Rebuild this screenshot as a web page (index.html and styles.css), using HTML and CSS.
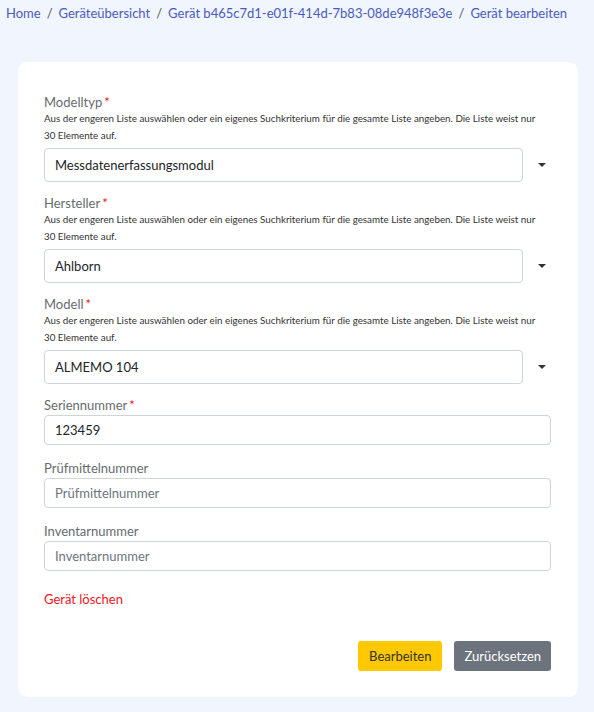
FILE: index.html
```html
<!DOCTYPE html>
<html lang="de">
<head>
<meta charset="utf-8">
<title>Gerät bearbeiten</title>
<link rel="stylesheet" href="styles.css">
</head>
<body>
<nav class="crumbs">
  <a href="#">Home</a><span class="sep">/</span><a href="#">Geräteübersicht</a><span class="sep">/</span><a href="#">Gerät b465c7d1-e01f-414d-7b83-08de948f3e3e</a><span class="sep">/</span><span class="cur">Gerät bearbeiten</span>
</nav>
<main class="card">
  <div class="group">
    <label class="lbl">Modelltyp<span class="req">*</span></label>
    <p class="help">Aus der engeren Liste auswählen oder ein eigenes Suchkriterium für die gesamte Liste angeben. Die Liste weist nur 30 Elemente auf.</p>
    <div class="select-row">
      <div class="field big">Messdatenerfassungsmodul</div>
      <span class="caret"></span>
    </div>
  </div>
  <div class="group">
    <label class="lbl">Hersteller<span class="req">*</span></label>
    <p class="help">Aus der engeren Liste auswählen oder ein eigenes Suchkriterium für die gesamte Liste angeben. Die Liste weist nur 30 Elemente auf.</p>
    <div class="select-row">
      <div class="field big">Ahlborn</div>
      <span class="caret"></span>
    </div>
  </div>
  <div class="group">
    <label class="lbl">Modell<span class="req">*</span></label>
    <p class="help">Aus der engeren Liste auswählen oder ein eigenes Suchkriterium für die gesamte Liste angeben. Die Liste weist nur 30 Elemente auf.</p>
    <div class="select-row">
      <div class="field big">ALMEMO 104</div>
      <span class="caret"></span>
    </div>
  </div>
  <div class="group text">
    <label class="lbl">Seriennummer<span class="req">*</span></label>
    <div class="field">123459</div>
  </div>
  <div class="group text">
    <label class="lbl">Prüfmittelnummer</label>
    <div class="field ph">Prüfmittelnummer</div>
  </div>
  <div class="group text">
    <label class="lbl">Inventarnummer</label>
    <div class="field ph">Inventarnummer</div>
  </div>
  <a class="delete" href="#">Gerät löschen</a>
  <div class="actions">
    <button class="btn edit">Bearbeiten</button>
    <button class="btn reset">Zurücksetzen</button>
  </div>
</main>
</body>
</html>
```

FILE: styles.css
```css
* { box-sizing: border-box; }
body {
  margin: 0;
  background: #f0f5fe;
  font-family: Lato, "Open Sans", sans-serif;
  color: #212529;
}
.crumbs {
  padding: 4px 6px 0;
  height: 62px;
  font-size: 13px;
  line-height: 18px;
  white-space: nowrap;
  color: #6c757d;
}
.crumbs a, .crumbs .cur { color: #4a5bc0; text-decoration: none; }
.crumbs .sep { padding: 0 6px; color: #555; }
.card {
  margin: 0 16px 0 18px;
  background: #fff;
  border-radius: 9px;
  padding: 32px 27px 26px 26px;
  height: 635px;
}
.group { margin-bottom: 13px; }
.group.text { margin-bottom: 15px; }
.lbl {
  display: block;
  font-size: 13px;
  line-height: 16px;
  color: #666b70;
}
.req { color: #e8141c; margin-left: 2px; }
.help {
  margin: 0 0 4px;
  font-size: 9.8px;
  line-height: 17px;
  color: #333;
  padding-right: 10px;
}
.select-row { display: flex; align-items: center; }
.field {
  flex: 1;
  height: 30px;
  border: 1px solid #ced4da;
  border-radius: 4px;
  padding: 0 10px;
  font-size: 13px;
  display: flex;
  align-items: center;
  color: #212529;
}
.group.text .lbl { margin-bottom: 2px; }
.field.big { height: 34px; }
.field.ph { color: #6c757d; }
.caret {
  width: 28px;
  display: flex;
  justify-content: center;
}
.caret::before {
  content: "";
  margin-left: 10px;
  border-left: 4px solid transparent;
  border-right: 4px solid transparent;
  border-top: 4px solid #333;
}
.delete {
  display: block;
  margin-top: 20px;
  font-size: 13px;
  line-height: 16px;
  color: #f0141e;
  text-decoration: none;
}
.actions {
  display: flex;
  justify-content: flex-end;
  gap: 12px;
  margin-top: 34px;
}
.btn {
  height: 30px;
  border: none;
  border-radius: 3px;
  font-family: inherit;
  font-size: 13px;
  padding: 0 11px;
}
.btn.edit { background: #ffc800; color: #333; }
.btn.reset { background: #6c737c; color: #fff; padding: 0 10px; }
```
